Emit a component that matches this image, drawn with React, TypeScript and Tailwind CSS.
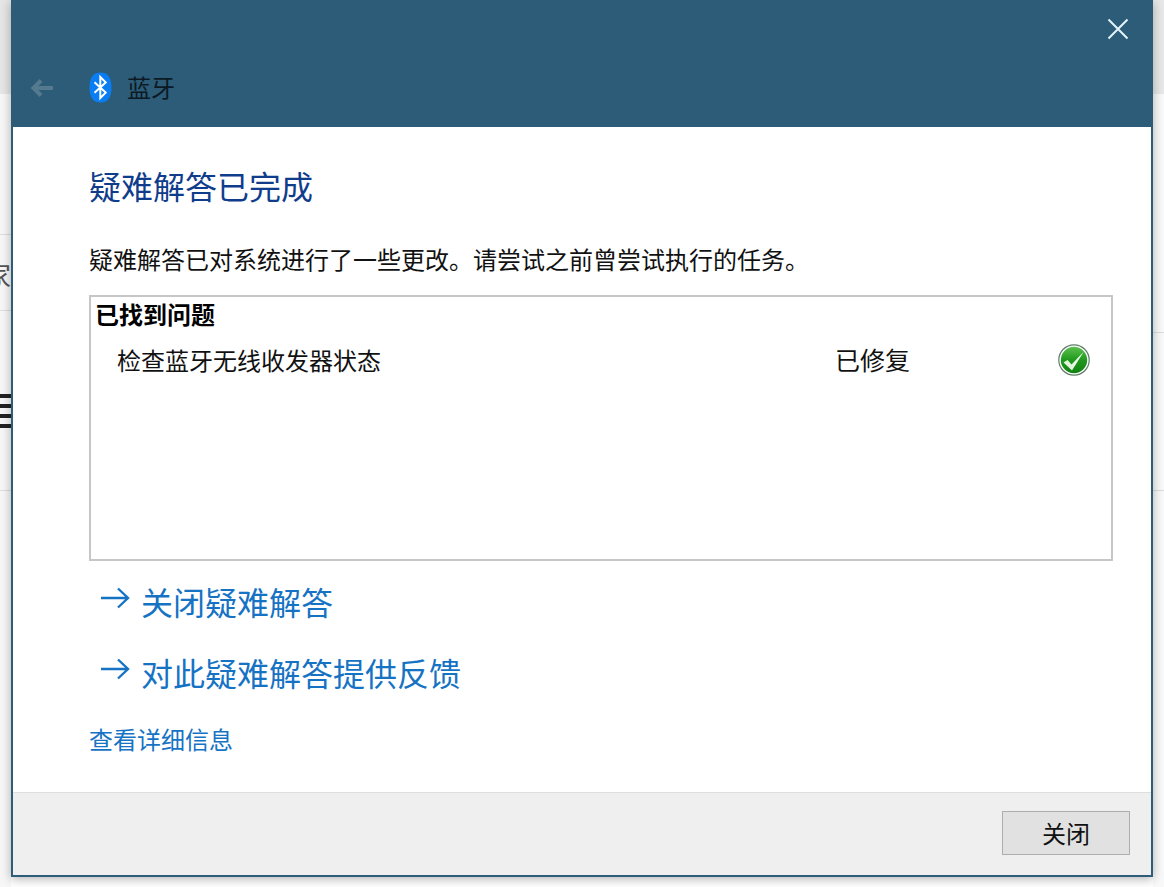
import React from 'react';

const FONT = "font-['Microsoft_YaHei','Noto_Sans_CJK_SC','Noto_Sans',sans-serif]";

function BluetoothBadge() {
  return (
    <svg width="23" height="31" viewBox="0 0 23 31" className="shrink-0">
      <path d="M11.5 0.5C18.5 0.5 22.5 5 22.5 15.5C22.5 26 18.5 30.5 11.5 30.5C4.5 30.5 0.5 26 0.5 15.5C0.5 5 4.5 0.5 11.5 0.5Z" fill="#0a7df2" />
      <path d="M5.5 10.2L16.7 20.6L11.3 26V5L16.7 10.4L5.5 20.8" fill="none" stroke="#ffffff" strokeWidth="2" />
    </svg>
  );
}

function FixedIcon() {
  return (
    <svg width="32" height="32" viewBox="0 0 32 32" className="shrink-0">
      <defs>
        <linearGradient id="fixed-green" x1="0" y1="0" x2="0" y2="1">
          <stop offset="0" stopColor="#5cc04e" />
          <stop offset="0.5" stopColor="#1f9a1d" />
          <stop offset="1" stopColor="#118011" />
        </linearGradient>
        <linearGradient id="fixed-tick" x1="1" y1="0" x2="0" y2="1">
          <stop offset="0" stopColor="#ffffff" />
          <stop offset="1" stopColor="#d4efcf" />
        </linearGradient>
      </defs>
      <circle cx="16" cy="16" r="15.2" fill="#ffffff" stroke="#5d7d68" strokeWidth="1.2" />
      <circle cx="16" cy="16" r="13.2" fill="url(#fixed-green)" />
      <path d="M5.5 18.5L9.5 16L13.5 20.5L25.5 8L14 26.5Z" fill="url(#fixed-tick)" />
    </svg>
  );
}

function LinkRow({ label }: { label: string }) {
  return (
    <div className="flex items-center h-[48px] pl-[11px] text-[32px] leading-[48px] text-[#1673c4]">
      <svg width="30" height="22" viewBox="0 0 30 22" className="shrink-0 mr-[11px] -mt-[7px]">
        <path d="M1 11H28M18 1.5L28 11L18 20.5" fill="none" stroke="currentColor" strokeWidth="2.4" />
      </svg>
      <span>{label}</span>
    </div>
  );
}

export default function App() {
  return (
    <div className={`flex w-[1164px] h-[887px] bg-white overflow-hidden ${FONT}`}>
      {/* page behind the dialog, left side */}
      <div className="w-[11px] shrink-0 flex flex-col bg-[#f7f7f7]">
        <div className="h-[94px] bg-[#e6e6e6]" />
        <div className="h-[140px]" />
        <div className="h-[76px] border-t border-[#dddddd] overflow-hidden relative">
          <span className="absolute left-[-16px] top-[24px] text-[27px] leading-[32px] text-[#555555]">家</span>
        </div>
        <div className="h-[180px] border-t border-[#dddddd] flex flex-col gap-[6px] pt-[83px]">
          <div className="h-[4px] bg-[#222222]" />
          <div className="h-[4px] bg-[#222222]" />
          <div className="h-[4px] bg-[#222222]" />
          <div className="h-[4px] bg-[#222222]" />
        </div>
        <div className="flex-1 border-t border-[#dddddd]" />
      </div>

      {/* dialog */}
      <div className="relative z-10 w-[1142px] h-[877px] shrink-0 flex flex-col border-x-2 border-b-2 border-[#2d5d78] bg-white shadow-[0_2px_10px_rgba(0,0,0,0.3)]">
        <div className="h-[127px] shrink-0 -mx-[2px] bg-[#2c5c78] flex flex-col">
          <div className="h-[59px] flex justify-end pt-[18px] pr-[24px]">
            <svg width="22" height="22" viewBox="0 0 22 22">
              <path d="M1.5 1.5L20.5 20.5M20.5 1.5L1.5 20.5" stroke="#e4f4fa" strokeWidth="2" fill="none" />
            </svg>
          </div>
          <div className="flex items-center h-[58px] pl-[19px] pb-[1px]">
            <svg width="24" height="20" viewBox="0 0 24 20" className="shrink-0">
              <path d="M11 2.5L3.5 10L11 17.5M3.5 10H23" fill="none" stroke="#557a90" strokeWidth="4" />
            </svg>
            <div className="ml-[35px]">
              <BluetoothBadge />
            </div>
            <span className="ml-[15px] -mt-[2px] text-[24px] leading-[32px] text-[#0b1a24]">蓝牙</span>
          </div>
        </div>

        <div className="flex-1 flex flex-col pl-[76px] pr-[38px] min-h-0">
          <h1 className="mt-[34px] text-[32px] leading-[48px] font-normal text-[#0f3d8c]">疑难解答已完成</h1>
          <p className="mt-[32px] text-[24px] leading-[36px] text-[#111111] whitespace-nowrap">
            疑难解答已对系统进行了一些更改。请尝试之前曾尝试执行的任务。
          </p>
          <div className="mt-[18px] h-[266px] border-2 border-[#c6c6c6] pl-[4px] pr-[5px]">
            <div className="text-[24px] leading-[34px] font-bold text-black">已找到问题</div>
            <div className="flex items-center h-[44px] mt-[7px] pl-[22px] pr-[16px] text-[24px] text-[#111111]">
              <span className="w-[718px]">检查蓝牙无线收发器状态</span>
              <span className="flex-1 text-[25px]">已修复</span>
              <FixedIcon />
            </div>
          </div>
          <div className="mt-[16px] flex flex-col gap-[23px]">
            <LinkRow label="关闭疑难解答" />
            <LinkRow label="对此疑难解答提供反馈" />
          </div>
          <div className="mt-[25px] text-[24px] leading-[36px] text-[#1673c4]">查看详细信息</div>
        </div>

        <div className="h-[83px] shrink-0 bg-[#efefef] border-t border-[#dfdfdf] flex justify-end items-start pt-[18px] pr-[21px]">
          <button className="w-[128px] h-[44px] bg-[#e1e1e1] border border-[#adadad] text-[24px] leading-[32px] text-[#111111]">
            关闭
          </button>
        </div>
      </div>

      {/* page behind the dialog, right side */}
      <div className="flex-1 flex flex-col bg-[#f9f9f9]">
        <div className="h-[94px] bg-[#e8e8e8]" />
        <div className="h-[238px]" />
        <div className="h-[158px] border-t border-[#dddddd]" />
        <div className="flex-1 border-t border-[#dddddd]" />
      </div>
    </div>
  );
}
